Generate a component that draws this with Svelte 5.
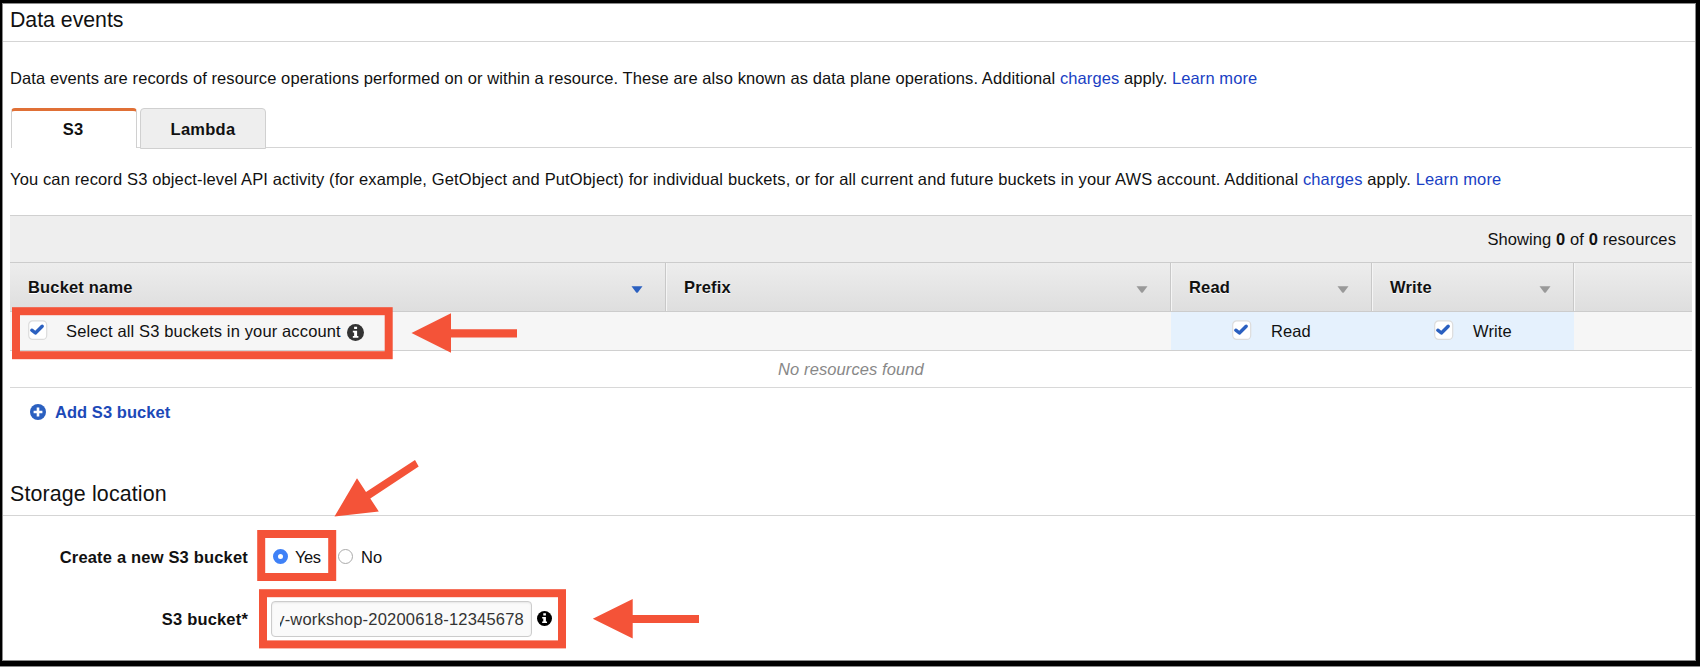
<script>
  const columns = [
    { label: 'Bucket name', sorted: true },
    { label: 'Prefix', sorted: false },
    { label: 'Read', sorted: false },
    { label: 'Write', sorted: false }
  ];
</script>

{#snippet check()}
  <svg class="check" viewBox="0 0 20 20" width="20" height="20" aria-hidden="true">
    <rect x="0.7" y="0.8" width="18" height="18.6" rx="4" fill="#fff" stroke="#dcdcdc" stroke-width="1.2" />
    <path d="M3.8 10.2 L7.4 13 L14.2 6.2" fill="none" stroke="#2b60c0" stroke-width="3.4" stroke-linecap="round" stroke-linejoin="round" />
  </svg>
{/snippet}

{#snippet info(size, color)}
  <svg class="info" viewBox="0 0 16 16" width={size} height={size} aria-hidden="true">
    <circle cx="8" cy="8" r="8" fill={color} />
    <path d="M6.7 2.5h2.8v2.3H6.7z M5.5 6.3h4v5h1.2v1.6H5.5v-1.6h1.2V7.9H5.5z" fill="#fff" />
  </svg>
{/snippet}

<div class="frame">
  <section class="events">
    <h2>Data events</h2>
    <p class="intro">Data events are records of resource operations performed on or within a resource. These are also known as data plane operations. Additional <a href="#charges">charges</a> apply. <a href="#more">Learn more</a></p>
    <div class="tabs">
      <button class="tab active">S3</button>
      <button class="tab">Lambda</button>
    </div>
    <p class="desc">You can record S3 object-level API activity (for example, GetObject and PutObject) for individual buckets, or for all current and future buckets in your AWS account. Additional <a href="#charges">charges</a> apply. <a href="#more">Learn more</a></p>

    <div class="table">
      <div class="summary"><span>Showing <b>0</b> of <b>0</b> resources</span></div>
      <div class="cols head">
        {#each columns as col}
          <div class="th">
            <span>{col.label}</span>
            <svg viewBox="0 0 12 7" width="12" height="7" aria-hidden="true"><path d="M0.5 0.3h11L7 6.2q-1 1-2 0z" fill={col.sorted ? '#2b60c0' : '#999'} /></svg>
          </div>
        {/each}
        <div class="th last"></div>
      </div>
      <div class="cols all">
        <div class="bucket">
          {@render check()}
          <span>Select all S3 buckets in your account</span>
          {@render info(17, '#333')}
        </div>
        <div></div>
        <div class="perm">{@render check()}<span>Read</span></div>
        <div class="perm write">{@render check()}<span>Write</span></div>
        <div></div>
      </div>
      <div class="empty">No resources found</div>
    </div>

    <button class="add">
      <svg viewBox="0 0 16 16" width="16" height="16" aria-hidden="true">
        <circle cx="8" cy="8" r="8" fill="#2b60c0" />
        <path d="M8 3.6v8.8M3.6 8h8.8" stroke="#fff" stroke-width="2.6" />
      </svg>
      <span>Add S3 bucket</span>
    </button>
  </section>

  <section class="storage">
    <h2>Storage location</h2>
    <div class="field create">
      <span class="label">Create a new S3 bucket</span>
      <span class="radio on"></span><span class="yes">Yes</span>
      <span class="radio"></span><span class="no">No</span>
    </div>
    <div class="field name">
      <span class="label">S3 bucket*</span>
      <div class="input"><div class="clip"><span>y-workshop-20200618-12345678</span></div></div>
      {@render info(15, '#000')}
    </div>
  </section>

  <svg class="marks" viewBox="0 0 1700 667" width="1700" height="667" aria-hidden="true">
    <g fill="none" stroke="#f45338" stroke-width="8">
      <rect x="16" y="311.2" width="372.7" height="44" />
      <rect x="261.2" y="534" width="71" height="43" />
      <rect x="263" y="593.2" width="299" height="51.2" />
    </g>
    <g fill="#f45338">
      <path d="M411.5 333 L451 313.2 V329.2 H517 V337.6 H451 V352.8 Z" />
      <path d="M334.5 516.5 L357 478.3 L366 492 L415 460 L418.7 466.5 L370.3 498.5 L378.8 511.5 Z" />
      <path d="M592.8 618.8 L632.7 599 V615 H699 V623 H632.7 V638.6 Z" />
    </g>
    <path d="M0 666.5H1700" stroke="#8b8b8b" />
  </svg>
</div>

<style>
  :global(body) { margin: 0; background: #fff; }
  .frame, .frame * { box-sizing: border-box; }
  .frame {
    position: relative;
    width: 1700px;
    height: 667px;
    border: solid #000;
    border-width: 3px 4px 6px 2px;
    box-shadow: inset 1px 1px 0 #8b8b8b, inset -1px -1px 0 #8b8b8b;
    font: 16.5px/20px "Liberation Sans", Arial, sans-serif;
    letter-spacing: 0.1px;
    color: #111;
    white-space: nowrap;
  }
  h2 {
    margin: 0 1px;
    padding: 4px 0 0 7px;
    height: 39px;
    border-bottom: 1px solid #d5d5d5;
    font-size: 21.3px;
    font-weight: 400;
    line-height: 27px;
    letter-spacing: -0.02px;
  }
  p { margin: 0; }
  a { color: #1a3fc4; text-decoration: none; }
  .intro { margin: 26px 0 0 8px; letter-spacing: 0.092px; }
  .desc { margin: 21px 0 0 8px; letter-spacing: 0.135px; }
  button { font: inherit; color: inherit; cursor: pointer; letter-spacing: inherit; }
  .tabs {
    display: flex;
    gap: 3px;
    height: 40px;
    margin: 20px 4px 0 9px;
    background: linear-gradient(#d5d5d5, #d5d5d5) 0 39px / 100% 1px no-repeat;
  }
  .tab {
    width: 126px;
    height: 41px;
    padding: 1px 0 0;
    border: 1px solid #d0d0d0;
    border-radius: 4px 4px 0 0;
    background: #eee;
    font-weight: 700;
    letter-spacing: 0.25px;
  }
  .tab.active {
    height: 40px;
    padding: 0 2px 2px 0;
    border-top: 3px solid #e07036;
    border-bottom: 0;
    background: #fff;
  }
  .table { margin: 26px 4px 0 8px; border-top: 1px solid #d0d0d0; }
  .summary {
    display: flex;
    justify-content: flex-end;
    height: 46px;
    padding: 13px 16px 0 0;
    background: #eee;
  }
  .cols { display: grid; grid-template-columns: 656px 505px 201px 202px 1fr; }
  .head {
    height: 50px;
    border-top: 1px solid #ccc;
    border-bottom: 1px solid #ccc;
    background: linear-gradient(#ededed, #dedede);
  }
  .th {
    display: flex;
    align-items: center;
    justify-content: space-between;
    padding: 0 22px 0 18px;
    border-right: 1px solid #c8c8c8;
    box-shadow: 1px 0 0 #f5f5f5;
    font-weight: 700;
    letter-spacing: 0.17px;
    text-shadow: 0 1px 0 #fff;
  }
  .th.last { border: 0; box-shadow: none; }
  .th svg { margin-top: 5px; }
  .all { height: 39px; background: #f6f6f6; border-bottom: 1px solid #d0d0d0; }
  .bucket { display: flex; align-items: center; padding: 0 0 0 18px; }
  .check { flex: none; display: block; margin-bottom: 2px; }
  .bucket span { margin: 0 6px 0 18px; letter-spacing: 0.14px; }
  .info { flex: none; display: block; }
  .bucket .info { margin-top: 3px; }
  .perm { display: flex; align-items: center; gap: 19px; padding-left: 61px; background: #e5f1fd; }
  .perm.write { padding-left: 62px; }
  .empty {
    height: 37px;
    padding-top: 8px;
    border-bottom: 1px solid #d8d8d8;
    text-align: center;
    font-style: italic;
    color: #888;
  }
  .add {
    display: flex;
    align-items: center;
    gap: 9px;
    margin: 14px 0 0 28px;
    padding: 0;
    border: 0;
    background: none;
    font-weight: 700;
    color: #1c49b8;
    letter-spacing: 0.05px;
  }
  .storage { margin-top: 55px; }
  .storage h2 { font-size: 21.4px; letter-spacing: 0.14px; }
  .field { display: flex; align-items: center; }
  .label { width: 237px; text-align: right; font-weight: 700; margin-left: 9px; letter-spacing: 0.18px; }
  .create { margin-top: 31px; }
  .radio {
    width: 15px;
    height: 15px;
    margin-bottom: 2px;
    border: 1px solid #aaa;
    border-radius: 50%;
    background: #fff;
  }
  .radio.on { margin-left: 25px; border: 5px solid #3f81f7; }
  .yes { width: 50px; padding-left: 7px; letter-spacing: -0.4px; }
  .no { padding-left: 8px; }
  .name { margin-top: 34px; }
  .input {
    width: 261px;
    height: 36px;
    margin: 0 5px 0 23px;
    padding: 7px 6px 0 8px;
    border: 1px solid #ccc;
    border-radius: 4px;
    background: #fafafa;
    box-shadow: inset 0 1px 2px #e6e6e6;
    color: #333;
    letter-spacing: 0.2px;
  }
  .name .info { margin-bottom: 2px; }
  .clip { display: flex; justify-content: flex-end; overflow: hidden; width: 244px; }
  .marks { position: absolute; left: -2px; top: -3px; pointer-events: none; }
</style>
